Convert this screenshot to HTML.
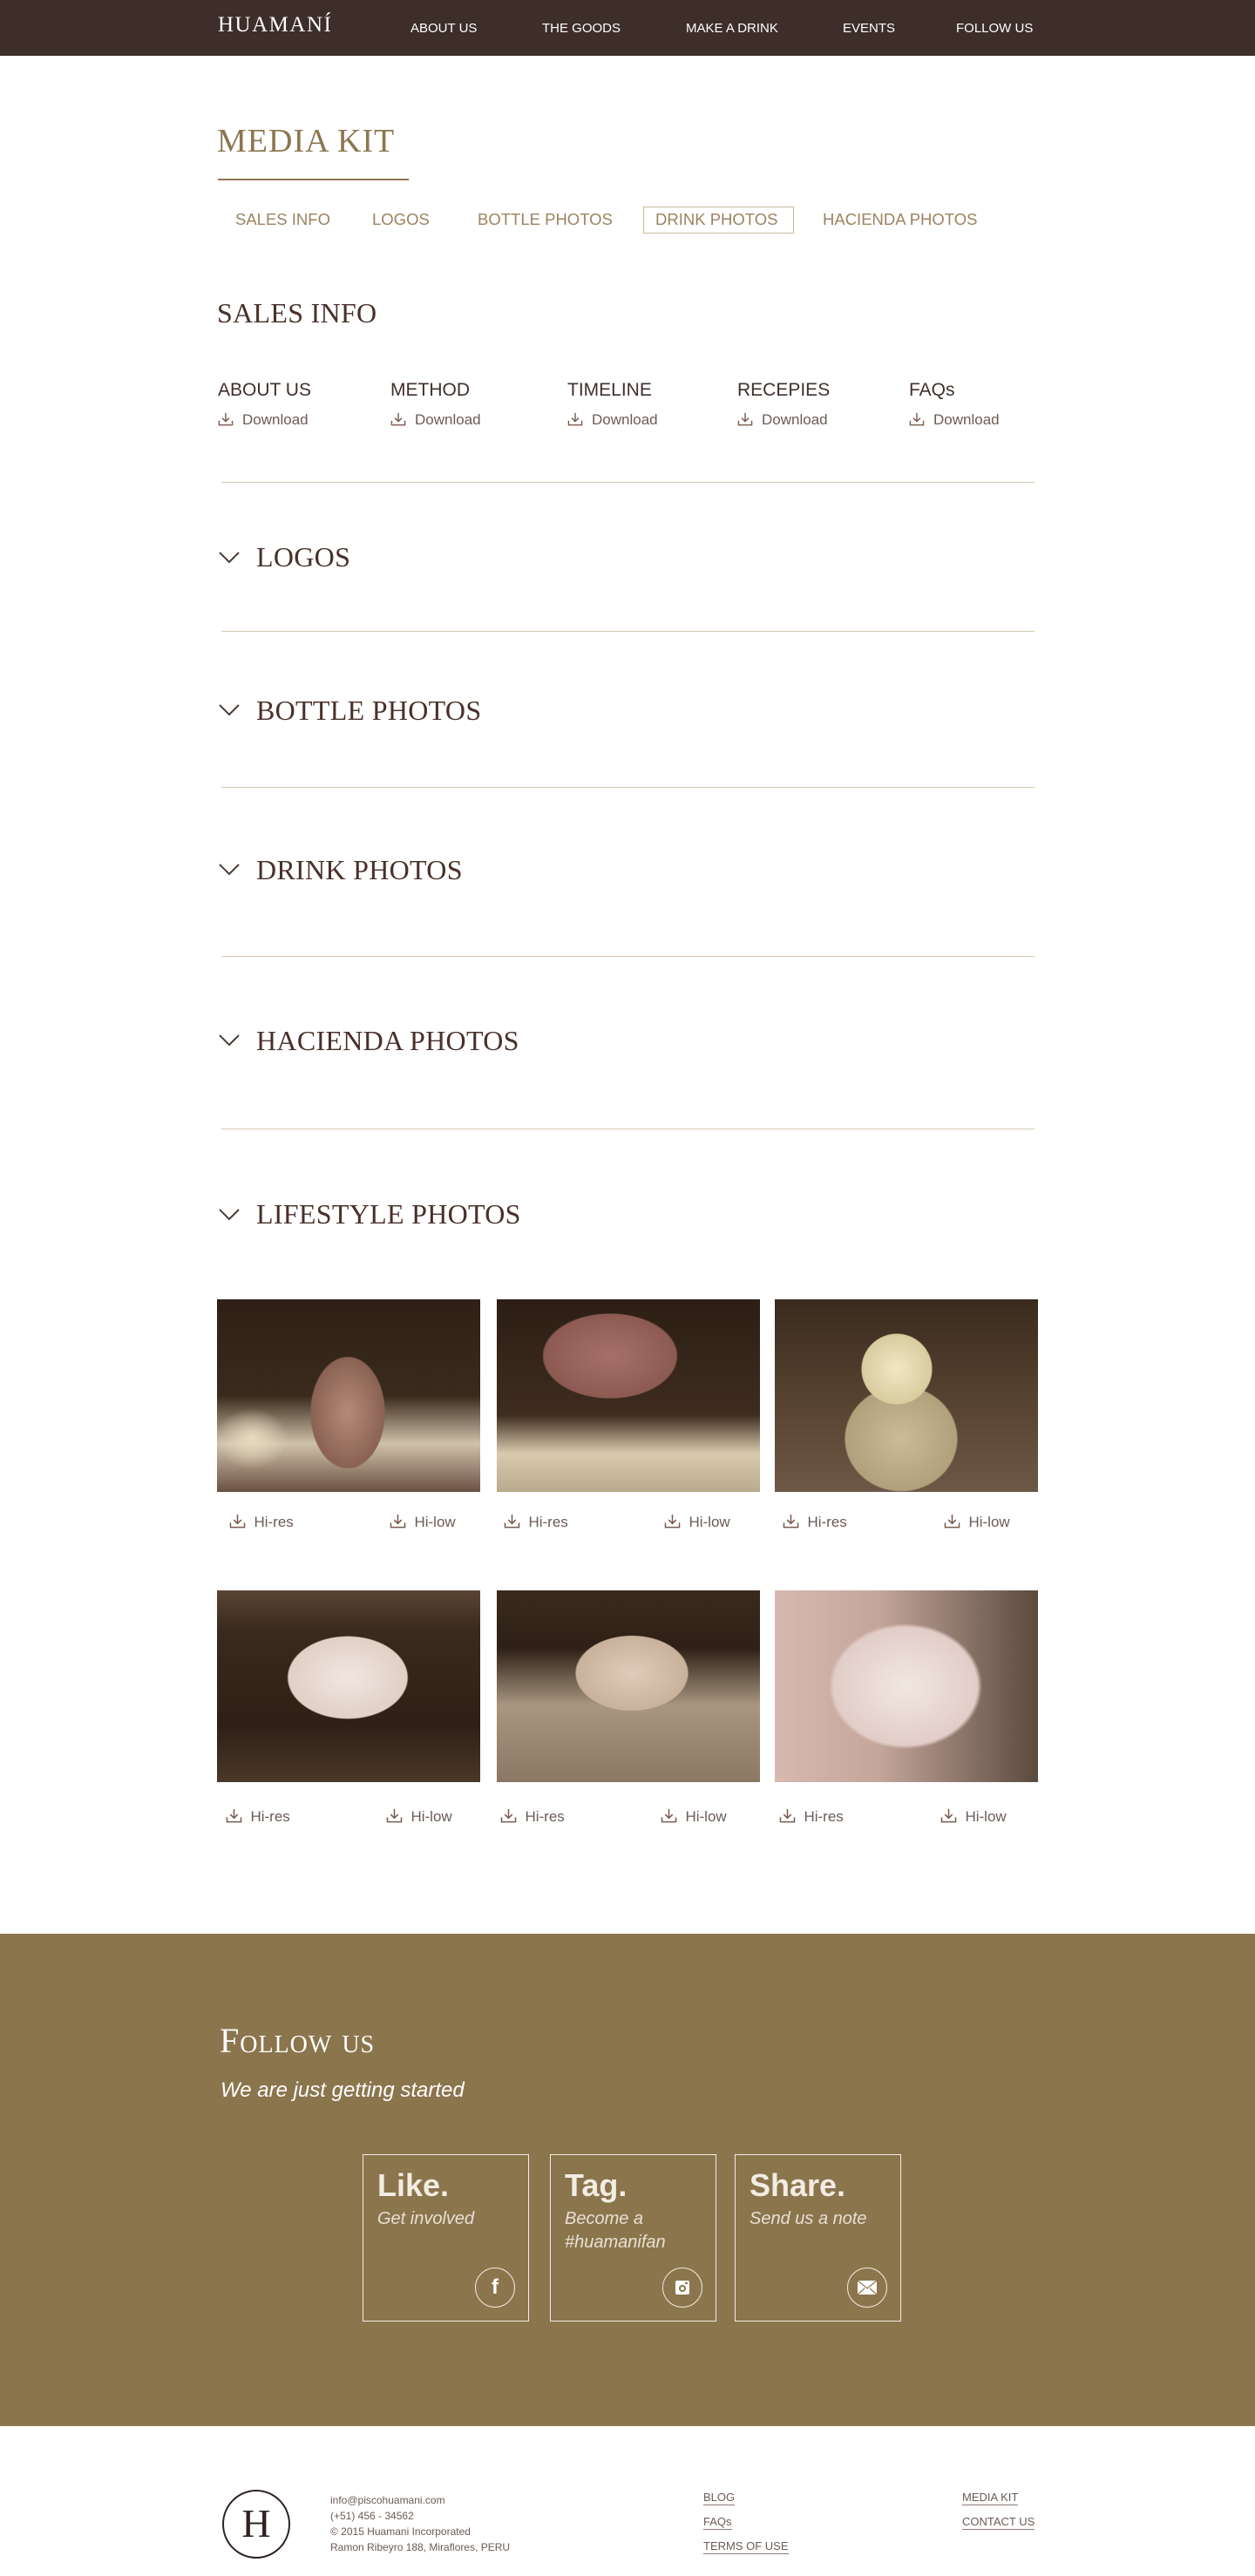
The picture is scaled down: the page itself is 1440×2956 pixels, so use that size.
<!DOCTYPE html>
<html><head><meta charset="utf-8"><style>
*{margin:0;padding:0;box-sizing:border-box}
body{width:1440px;height:2956px;background:#fff;font-family:"Liberation Sans",sans-serif;position:relative;overflow:hidden}
.a{position:absolute;white-space:nowrap}
.serif{font-family:"Liberation Serif",serif}
nav{position:absolute;left:0;top:0;width:1440px;height:64px;background:#3d2e29}
.nv{color:#fff;font-size:15px;top:24px}
.tab{color:#9c8260;font-size:18.5px;top:241px}
.h2{color:#4a302a;font-size:32px;letter-spacing:0.3px}
.col{color:#3f302c;font-size:21px;top:436px}
.dl{color:#6b5b56;font-size:17px;top:472px}
.line{position:absolute;left:254px;width:933px;height:1px;background:#d6c8b2}
.img{position:absolute;width:302px;height:221px}
.lb{color:#6b5b56;font-size:17px}
.box{position:absolute;top:2472px;width:191px;height:192px;border:1.5px solid #f2ece2}
.box b{position:absolute;left:16px;top:14px;font-size:36px;color:#f3ece2}
.box i{position:absolute;left:16px;top:60px;font-size:20px;color:#e9e0d3;font-weight:300;line-height:27px}
.ic{position:absolute;right:15px;bottom:15px;width:46px;height:46px;border:1.5px solid #efe7da;border-radius:50%;display:flex;align-items:center;justify-content:center;color:#fff}
.ft{color:#6b5b56;font-size:12px;left:379px}
.fl{color:#6b5b56;font-size:13px;border-bottom:1px solid #8a7a75;padding-bottom:1px}
</style></head><body>
<nav></nav>
<div class="a serif" style="left:250px;top:15px;color:#fff;font-size:25px;letter-spacing:1.5px">HUAMANÍ</div>
<div class="a nv" style="left:471px">ABOUT US</div>
<div class="a nv" style="left:622px">THE GOODS</div>
<div class="a nv" style="left:787px">MAKE A DRINK</div>
<div class="a nv" style="left:967px">EVENTS</div>
<div class="a nv" style="left:1097px">FOLLOW US</div>

<div class="a serif" style="left:249px;top:140px;color:#8c7550;font-size:38px;letter-spacing:1px">MEDIA KIT</div>
<div class="a" style="left:250px;top:205px;width:219px;height:2px;background:#8c7550"></div>
<div class="a tab" style="left:270px">SALES INFO</div>
<div class="a tab" style="left:427px">LOGOS</div>
<div class="a tab" style="left:548px">BOTTLE PHOTOS</div>
<div class="a" style="left:738px;top:237px;width:173px;height:31px;border:1px solid #c9b79f"></div>
<div class="a tab" style="left:752px">DRINK PHOTOS</div>
<div class="a tab" style="left:944px">HACIENDA PHOTOS</div>

<div class="a serif h2" style="left:249px;top:341px">SALES INFO</div>
<div class="a col" style="left:250px">ABOUT US</div>
<div class="a col" style="left:448px">METHOD</div>
<div class="a col" style="left:651px">TIMELINE</div>
<div class="a col" style="left:846px">RECEPIES</div>
<div class="a col" style="left:1043px">FAQs</div>
<svg width="0" height="0" style="position:absolute"><defs><symbol id="d" viewBox="0 0 20 18"><path d="M10 1v11M5.5 7.5L10 12l4.5-4.5M1.5 11v5.5h17V11" fill="none" stroke="#7a5a4e" stroke-width="1.6"/></symbol></defs></svg>
<svg class="a" style="left:250px;top:473px" width="18" height="16"><use href="#d"/></svg><div class="a dl" style="left:278px">Download</div>
<svg class="a" style="left:448px;top:473px" width="18" height="16"><use href="#d"/></svg><div class="a dl" style="left:476px">Download</div>
<svg class="a" style="left:651px;top:473px" width="18" height="16"><use href="#d"/></svg><div class="a dl" style="left:679px">Download</div>
<svg class="a" style="left:846px;top:473px" width="18" height="16"><use href="#d"/></svg><div class="a dl" style="left:874px">Download</div>
<svg class="a" style="left:1043px;top:473px" width="18" height="16"><use href="#d"/></svg><div class="a dl" style="left:1071px">Download</div>
<div class="line" style="top:553px"></div>

<svg class="a" style="left:251px;top:633px" width="24" height="14"><path d="M1 1l11 11 11-11" fill="none" stroke="#4a3a35" stroke-width="2"/></svg>
<div class="a serif h2" style="left:294px;top:621px">LOGOS</div>
<div class="line" style="top:724px"></div>
<svg class="a" style="left:251px;top:808px" width="24" height="14"><path d="M1 1l11 11 11-11" fill="none" stroke="#4a3a35" stroke-width="2"/></svg>
<div class="a serif h2" style="left:294px;top:797px">BOTTLE PHOTOS</div>
<div class="line" style="top:903px"></div>
<svg class="a" style="left:251px;top:991px" width="24" height="14"><path d="M1 1l11 11 11-11" fill="none" stroke="#4a3a35" stroke-width="2"/></svg>
<div class="a serif h2" style="left:294px;top:980px">DRINK PHOTOS</div>
<div class="line" style="top:1097px"></div>
<svg class="a" style="left:251px;top:1187px" width="24" height="14"><path d="M1 1l11 11 11-11" fill="none" stroke="#4a3a35" stroke-width="2"/></svg>
<div class="a serif h2" style="left:294px;top:1176px">HACIENDA PHOTOS</div>
<div class="line" style="top:1295px"></div>
<svg class="a" style="left:251px;top:1387px" width="24" height="14"><path d="M1 1l11 11 11-11" fill="none" stroke="#4a3a35" stroke-width="2"/></svg>
<div class="a serif h2" style="left:294px;top:1375px">LIFESTYLE PHOTOS</div>

<div class="img" style="left:249px;top:1491px;background:radial-gradient(ellipse 60px 90px at 150px 130px,#b58a78,#8a6253 70%,transparent 72%),radial-gradient(ellipse 60px 50px at 40px 160px,#e8dcc0,transparent 70%),linear-gradient(#2e2016 0%,#3a2a1c 50%,#cfc1aa 75%,#6a5040)"></div>
<div class="img" style="left:570px;top:1491px;background:radial-gradient(ellipse 95px 60px at 130px 65px,#a7706a,#8c5a52 80%,transparent 82%),linear-gradient(#2c1e14 0%,#3e2c1f 60%,#d9c9ad 80%,#b9a98d)"></div>
<div class="img" style="left:889px;top:1491px;background:radial-gradient(circle 50px at 140px 80px,#f0e7c4,#d8cc9f 80%,transparent 82%),radial-gradient(ellipse 75px 70px at 145px 160px,#cbbb96,#b0a07c 85%,transparent 87%),linear-gradient(#3a2b1e,#5a4633 60%,#6d5846)"></div>
<div class="lb a" style="left:263px;top:1737px"><svg width="19" height="17" style="vertical-align:-2px"><use href="#d"/></svg>&nbsp;&nbsp;Hi-res</div>
<div class="lb a" style="left:447px;top:1737px"><svg width="19" height="17" style="vertical-align:-2px"><use href="#d"/></svg>&nbsp;&nbsp;Hi-low</div>
<div class="lb a" style="left:578px;top:1737px"><svg width="19" height="17" style="vertical-align:-2px"><use href="#d"/></svg>&nbsp;&nbsp;Hi-res</div>
<div class="lb a" style="left:762px;top:1737px"><svg width="19" height="17" style="vertical-align:-2px"><use href="#d"/></svg>&nbsp;&nbsp;Hi-low</div>
<div class="lb a" style="left:898px;top:1737px"><svg width="19" height="17" style="vertical-align:-2px"><use href="#d"/></svg>&nbsp;&nbsp;Hi-res</div>
<div class="lb a" style="left:1083px;top:1737px"><svg width="19" height="17" style="vertical-align:-2px"><use href="#d"/></svg>&nbsp;&nbsp;Hi-low</div>

<div class="img" style="left:249px;top:1825px;height:220px;background:radial-gradient(ellipse 80px 55px at 150px 100px,#f1e6e0,#e0d0c6 85%,transparent 87%),linear-gradient(#5a4534 0%,#3a2a1d 20%,#2e2016 70%,#4a3828)"></div>
<div class="img" style="left:570px;top:1825px;height:220px;background:radial-gradient(ellipse 75px 50px at 155px 95px,#e0cbb9,#c9b29c 85%,transparent 87%),linear-gradient(#3a2a1d 0%,#2e2016 30%,#a89680 60%,#8a7864)"></div>
<div class="img" style="left:889px;top:1825px;height:220px;background:radial-gradient(ellipse 110px 90px at 150px 110px,#f1e7e0,#e2cdc8 75%,transparent 80%),linear-gradient(90deg,#d7b9b0,#c3a59a 40%,#5a4a3e)"></div>
<div class="lb a" style="left:259px;top:2075px"><svg width="19" height="17" style="vertical-align:-2px"><use href="#d"/></svg>&nbsp;&nbsp;Hi-res</div>
<div class="lb a" style="left:443px;top:2075px"><svg width="19" height="17" style="vertical-align:-2px"><use href="#d"/></svg>&nbsp;&nbsp;Hi-low</div>
<div class="lb a" style="left:574px;top:2075px"><svg width="19" height="17" style="vertical-align:-2px"><use href="#d"/></svg>&nbsp;&nbsp;Hi-res</div>
<div class="lb a" style="left:758px;top:2075px"><svg width="19" height="17" style="vertical-align:-2px"><use href="#d"/></svg>&nbsp;&nbsp;Hi-low</div>
<div class="lb a" style="left:894px;top:2075px"><svg width="19" height="17" style="vertical-align:-2px"><use href="#d"/></svg>&nbsp;&nbsp;Hi-res</div>
<div class="lb a" style="left:1079px;top:2075px"><svg width="19" height="17" style="vertical-align:-2px"><use href="#d"/></svg>&nbsp;&nbsp;Hi-low</div>

<div class="a" style="left:0;top:2219px;width:1440px;height:565px;background:#8b754d"></div>
<div class="a serif" style="left:252px;top:2318px;color:#fff;font-size:40px;font-variant:small-caps;letter-spacing:1px">Follow us</div>
<div class="a" style="left:253px;top:2385px;color:#fff;font-size:24px;font-style:italic">We are just getting started</div>
<div class="box" style="left:416px"><b>Like.</b><i>Get involved</i><div class="ic"><span style="font-weight:bold;font-size:24px">f</span></div></div>
<div class="box" style="left:631px"><b>Tag.</b><i>Become a<br>#huamanifan</i><div class="ic"><svg width="20" height="20"><rect x="2" y="2" width="16" height="16" rx="2" fill="#fff"/><circle cx="10" cy="11" r="4" fill="#8b754d"/><circle cx="10" cy="11" r="2" fill="#fff"/><rect x="13" y="4" width="3" height="2" fill="#8b754d"/></svg></div></div>
<div class="box" style="left:843px"><b>Share.</b><i>Send us a note</i><div class="ic"><svg width="24" height="18"><rect x="1" y="1" width="22" height="16" fill="#fff"/><path d="M1 1l11 9 11-9M1 17l8-7M23 17l-8-7" fill="none" stroke="#8b754d" stroke-width="1.2"/></svg></div></div>

<div class="a" style="left:255px;top:2857px;width:78px;height:79px;border:2.5px solid #2e2320;border-radius:50%"></div>
<div class="a serif" style="left:255px;top:2868px;width:78px;text-align:center;font-size:46px;color:#2e2320;line-height:56px">H</div>
<div class="a ft" style="top:2862px">info@piscohuamani.com</div>
<div class="a ft" style="top:2880px">(+51) 456 - 34562</div>
<div class="a ft" style="top:2898px">© 2015 Huamani Incorporated</div>
<div class="a ft" style="top:2916px">Ramon Ribeyro 188, Miraflores, PERU</div>
<div class="a fl" style="left:807px;top:2858px">BLOG</div>
<div class="a fl" style="left:807px;top:2886px">FAQs</div>
<div class="a fl" style="left:807px;top:2914px">TERMS OF USE</div>
<div class="a fl" style="left:1104px;top:2858px">MEDIA KIT</div>
<div class="a fl" style="left:1104px;top:2886px">CONTACT US</div>
</body></html>
